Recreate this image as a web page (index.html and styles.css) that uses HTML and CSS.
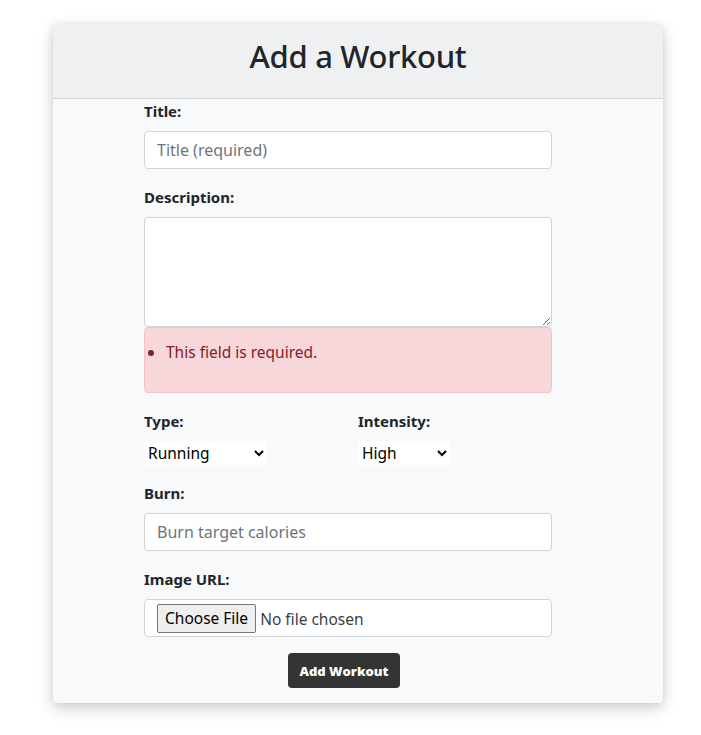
FILE: index.html
```html
<!DOCTYPE html>
<html lang="en">
<head>
<meta charset="utf-8">
<title>Add a Workout</title>
<link rel="stylesheet" href="styles.css">
</head>
<body>
<div class="page">
  <div class="card">
    <div class="card-header">
      <h1 class="card-title">Add a Workout</h1>
    </div>
    <form class="card-body">
      <div class="field">
        <label class="form-label" for="title">Title:</label>
        <input class="form-control" id="title" type="text" placeholder="Title (required)">
      </div>
      <div class="field">
        <label class="form-label" for="desc">Description:</label>
        <textarea class="form-control textarea" id="desc"></textarea>
        <div class="alert">
          <ul class="errors"><li>This field is required.</li></ul>
        </div>
      </div>
      <div class="field row">
        <div class="col">
          <label class="form-label" for="type">Type:</label>
          <select class="plain-select select-type" id="type">
            <option>Running</option>
            <option>Cycling</option>
            <option>Swimming</option>
          </select>
        </div>
        <div class="col">
          <label class="form-label" for="intensity">Intensity:</label>
          <select class="plain-select select-int" id="intensity">
            <option>High</option>
            <option>Medium</option>
            <option>Low</option>
          </select>
        </div>
      </div>
      <div class="field">
        <label class="form-label" for="burn">Burn:</label>
        <input class="form-control" id="burn" type="text" placeholder="Burn target calories">
      </div>
      <div class="field">
        <label class="form-label" for="img">Image URL:</label>
        <div class="form-control file-box">
          <input class="file-input" id="img" type="file">
        </div>
      </div>
      <div class="actions">
        <button class="btn" type="button">Add Workout</button>
      </div>
    </form>
  </div>
</div>
</body>
</html>
```

FILE: styles.css
```css
* { box-sizing: border-box; }
html, body { margin: 0; padding: 0; background: #fff; }
body {
  font-family: "Noto Sans", "Open Sans", sans-serif;
  color: #212529;
  font-size: 16px;
  min-height: 735px;
}
.page {
  padding: 24px 0 30px 53px;
}
.card {
  width: 610px;
  background: #f8f9fa;
  border-radius: 4px;
  box-shadow: 0 5px 15px rgba(0, 0, 0, 0.2), 0 0 6px rgba(0,0,0,0.05);
  overflow: hidden;
}
.card-header {
  background: #eff0f2;
  border-bottom: 1px solid #d3d5d8;
  height: 75px;
  display: flex;
  align-items: center;
  justify-content: center;
}
.card-title {
  margin: 0 0 9px;
  font-size: 31px;
  font-weight: 500;
  line-height: 1.2;
  letter-spacing: -0.3px;
}
.card-body {
  padding: 0 0 15px 91px;
  width: 499px;
}
.field { margin-bottom: 16px; }
.form-label {
  display: block;
  font-weight: 700;
  font-size: 15px;
  line-height: 24px;
  margin-bottom: 8px;
}
.form-control {
  display: block;
  width: 408px;
  height: 38px;
  padding: 6px 12px;
  font-family: inherit;
  font-size: 16px;
  color: #212529;
  background: #fff;
  border: 1px solid #ced4da;
  border-radius: 4px;
}
.form-control::placeholder { color: #6c757d; }
.textarea {
  height: 110px;
  resize: vertical;
}
.alert {
  background: #f8d7da;
  border: 1px solid #f5c2c7;
  border-radius: 4px;
  color: #842029;
  padding: 12px 0 28px;
}
.errors {
  margin: 0;
  padding-left: 21px;
  line-height: 24px;
  font-size: 15.5px;
}
.row {
  display: grid;
  grid-template-columns: 214px 194px;
}
.plain-select {
  display: block;
  height: 24px;
  border: none;
  background: #fff;
  font-family: "Noto Sans", sans-serif;
  font-size: 15.5px;
  color: #000;
  padding: 0;
  border-radius: 0;
}
.select-type { width: 123px; }
.select-int { width: 92px; }
.file-box {
  padding: 5px 12px;
  display: flex;
  align-items: center;
}
.file-input {
  font-family: inherit;
  font-size: 15.5px;
  color: #3a3f44;
}
.file-input::file-selector-button {
  font-family: inherit;
  font-size: 15.5px;
  height: 29px;
  padding: 0 7px;
  margin-right: 4px;
  border: 1px solid #767676;
  border-radius: 2px;
  background: #efefef;
  color: #000;
}
.actions {
  display: flex;
  justify-content: center;
  width: 400px;
}
.btn {
  background: #343434;
  color: #fff;
  border: none;
  border-radius: 4px;
  height: 35px;
  padding: 0 12px;
  font-family: "Open Sans", sans-serif;
  font-weight: 800;
  font-size: 13px;
}
```
